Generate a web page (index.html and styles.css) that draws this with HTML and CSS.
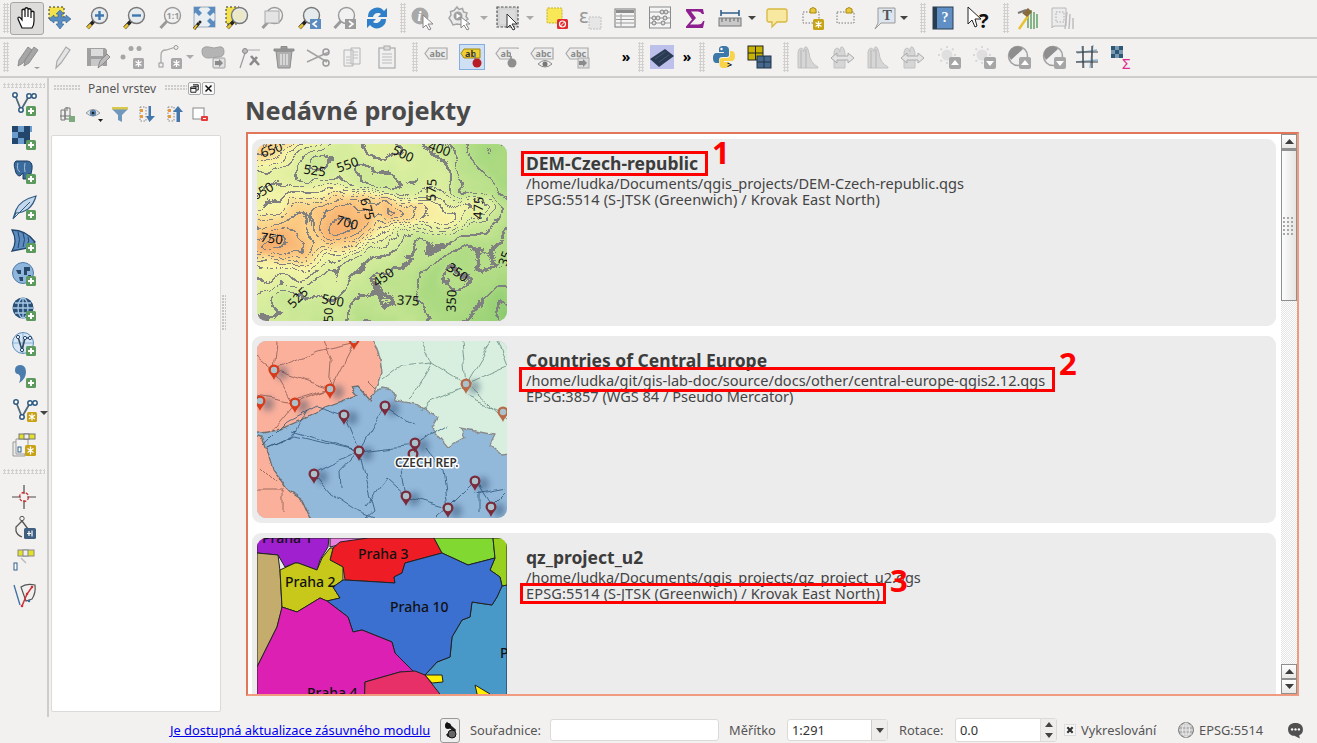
FILE: index.html
```html
<!DOCTYPE html>
<html lang="cs">
<head>
<meta charset="utf-8">
<title>QGIS – Nedávné projekty</title>
<link rel="stylesheet" href="styles.css">
</head>
<body>
<svg class="defs" width="0" height="0" aria-hidden="true">
  <defs>
    <g id="plus"><rect x="14" y="14" width="10" height="10" rx="1.5" fill="#5c9a5e"/><path d="M19 16v6M16 19h6" stroke="#fff" stroke-width="2"/></g>
    <g id="mag"><path d="M9 15L2.500 22" stroke="#222" stroke-width="3.500"/><path d="M6 18.500L2.500 22" stroke="#e8c22e" stroke-width="2.500"/><circle cx="14.500" cy="9.500" r="8" fill="#e6ebee" stroke="#777" stroke-width="1.400"/></g>
    <g id="magg"><path d="M9 15L2.500 22" stroke="#9a9a9a" stroke-width="3"/><circle cx="14.500" cy="9.500" r="8" fill="#f1f1f1" stroke="#9a9a9a" stroke-width="1.400"/></g>
    <g id="abc"><path d="M5 3H23V14H5L1 8.500Z" fill="#ececec" stroke="#a8a8a8" stroke-width="1.200"/><text x="5.500" y="12" class="lab">abc</text></g>
    <g id="hist"><path d="M3 23V7Q4 3 6 3T9 7V4Q10 1 11.500 2T14 8Q15 18 23 22V23Z" fill="#d6d6d6" stroke="#c2c2c2"/><path d="M6 5V23M11 4V23" stroke="#b4b4b4"/></g>
    <g id="hist2"><path d="M4 23V7Q5 3 7 3T10 7V4Q11 1 12.500 2T15 8V23Z" fill="#d6d6d6" stroke="#c2c2c2"/><path d="M1 13L7 8V11H18V8L24 13L18 18V15H7V18Z" fill="#e4e4e4" stroke="#aaa"/></g>
    <g id="sun"><circle cx="10" cy="10" r="5.500" fill="#dfdfdf"/><path d="M10 1V3M10 17V19M1 10H3M17 10H19M3.500 3.500L5 5M15 5L16.500 3.500M3.500 16.500L5 15" stroke="#d8d8d8" stroke-width="2"/><rect x="12" y="12" width="12" height="12" rx="2" fill="#a6a6a6"/></g>
    <g id="disc"><circle cx="11" cy="11" r="9.500" fill="#f0f0f0" stroke="#a0a0a0" stroke-width="1.500"/><path d="M4 15A8 8 0 0 1 16 4Z" fill="#8e8e8e"/><rect x="12" y="12" width="12" height="12" rx="2" fill="#a6a6a6"/></g>
    <g id="pin"><path d="M-5.500 0A5.500 5.500 0 1 1 5.500 0C5.500 3 2 5 0 10C-2 5-5.500 3-5.500 0Z" fill="currentColor"/><circle r="3.200" fill="#a9c2cc"/></g>
    <g id="v"><path d="M3 3L9 18L17 4H22" fill="none" stroke="#50687a" stroke-width="1.800"/><circle cx="3" cy="3" r="2.200" fill="#fff" stroke="#2e5a82" stroke-width="1.500"/><circle cx="9" cy="18" r="2.200" fill="#fff" stroke="#2e5a82" stroke-width="1.500"/><circle cx="17" cy="4" r="2.200" fill="#fff" stroke="#2e5a82" stroke-width="1.500"/><circle cx="22" cy="4" r="2.200" fill="#fff" stroke="#2e5a82" stroke-width="1.500"/></g>
    <linearGradient id="dbase" x1="0" y1="0" x2="1" y2="1"><stop offset="0" stop-color="#949494"/><stop offset=".5" stop-color="#7e7e7e"/><stop offset=".8" stop-color="#505050"/><stop offset="1" stop-color="#242424"/></linearGradient>
    <radialGradient id="pk"><stop offset="0" stop-color="#f4f4f4"/><stop offset=".6" stop-color="#e4e4e4" stop-opacity=".7"/><stop offset="1" stop-color="#d0d0d0" stop-opacity="0"/></radialGradient>
    <radialGradient id="lo"><stop offset="0" stop-color="#484848"/><stop offset="1" stop-color="#484848" stop-opacity="0"/></radialGradient>
    <radialGradient id="tl"><stop offset="0" stop-color="#d8d8d8"/><stop offset="1" stop-color="#d8d8d8" stop-opacity="0"/></radialGradient>
    <filter id="dem" x="0" y="0" width="100%" height="100%" color-interpolation-filters="sRGB">
      <feTurbulence type="fractalNoise" baseFrequency="0.03" numOctaves="3" seed="7" result="n"/>
      <feTurbulence type="fractalNoise" baseFrequency="0.02" numOctaves="2" seed="11"/>
      <feColorMatrix type="matrix" values="1 0 0 0 0  1 0 0 0 0  1 0 0 0 0  0 0 0 0 1" result="rel"/>
      <feGaussianBlur in="SourceGraphic" stdDeviation="6" result="b"/>
      <feComposite in="b" in2="rel" operator="arithmetic" k1="0" k2="1" k3="0.2" k4="-0.1" result="bh"/>
      <feDisplacementMap in="bh" in2="n" scale="24" xChannelSelector="R" yChannelSelector="G" result="d"/>
      <feComponentTransfer in="d" result="c">
        <feFuncR type="table" tableValues="0.36 0.47 0.66 0.84 0.97 0.99 0.96"/>
        <feFuncG type="table" tableValues="0.70 0.76 0.85 0.93 0.96 0.80 0.64"/>
        <feFuncB type="table" tableValues="0.36 0.40 0.50 0.62 0.66 0.52 0.40"/>
      </feComponentTransfer>
      <feColorMatrix in="d" type="matrix" values="0 0 0 0 0.5  0 0 0 0 0.5  0 0 0 0 0.5  1 0 0 0 0" result="h"/>
      <feComponentTransfer in="h">
        <feFuncA type="discrete" tableValues="0 0 0 0 0 0 1 0 0 0 0 0 0 1 0 0 0 0 0 0 1 0 0 0 0 0 0 1 0 0 0 0 0 0 1 0 0 0 0 0 0 1 0 0 0 0 0 0 1 0 0 0 0 0 0 1 0 0 0 0 0 0 1 0 0 0 0 0 0 1 0 0 0 0 0 0 1 0 0 0 0 0 0 1 0 0 0 0 0 0 1 0 0 0 0 0 0 1 0 0 0 0 0 0 1 0 0 0 0 0 0 1 0 0 0 0 0 0 1 0 0 0 0 0 0 1 0 0"/>
      </feComponentTransfer>
      <feGaussianBlur stdDeviation="0.45" result="l"/>
      <feMerge><feMergeNode in="c"/><feMergeNode in="l"/></feMerge>
    </filter>
    <filter id="soft"><feGaussianBlur stdDeviation="3"/></filter>
    <filter id="wig" x="-10%" y="-10%" width="120%" height="120%" color-interpolation-filters="sRGB">
      <feTurbulence type="fractalNoise" baseFrequency="0.05" numOctaves="2" seed="3" result="n"/>
      <feDisplacementMap in="SourceGraphic" in2="n" scale="9" xChannelSelector="R" yChannelSelector="G"/>
    </filter>
    <filter id="edge" x="-10%" y="-10%" width="120%" height="120%" color-interpolation-filters="sRGB">
      <feTurbulence type="fractalNoise" baseFrequency="0.12" numOctaves="2" seed="5" result="n"/>
      <feDisplacementMap in="SourceGraphic" in2="n" scale="5" xChannelSelector="R" yChannelSelector="G"/>
    </filter>
  </defs>
</svg>

<div class="app">
  <div class="tb">
    <i class="hd m3"></i>
    <span class="active m1"><svg class="ic" viewBox="0 0 24 24"><path d="M7 22L3 13Q2.500 10.500 5 11.500L7 14V4Q8.500 2.500 10 4V11V2.500Q11.500 1 13 2.500V11V3.500Q14.500 2 16 3.500V12V6Q17.500 4.500 19 6V15Q19 19 17 22Z" fill="#fff" stroke="#111" stroke-width="1.200"/></svg></span>
    <svg class="ic m4" viewBox="0 0 24 24"><rect x="1" y="1" width="15" height="13" fill="#f4e24c" stroke="#333" stroke-dasharray="2"/><path d="M12 4L16 8H14V11H18V9L23 13L18 17V15H14V18H16L12 23L8 18H10V15H6V17L1 13L6 9V11H10V8H8Z" fill="#5a8cc0" stroke="#2f5f92" stroke-width=".6"/></svg>
    <svg class="ic m13" viewBox="0 0 24 24"><use href="#mag"/><path d="M14.500 5V14M10 9.500H19" stroke="#3f78ae" stroke-width="2.400"/></svg>
    <svg class="ic m13" viewBox="0 0 24 24"><use href="#mag"/><path d="M10 9.500H19" stroke="#3f78ae" stroke-width="2.400"/></svg>
    <svg class="ic m12" viewBox="0 0 24 24"><use href="#magg"/><text x="8.500" y="13" class="t9 gy">1:1</text></svg>
    <svg class="ic m10" viewBox="0 0 24 24"><rect x="2" y="1" width="21" height="20" fill="#e8eef2" stroke="#9ab"/><path d="M2 1H9L6.500 3.500L10 7L7 10L3.500 6.500L2 8ZM23 1H16L18.500 3.500L15 7L18 10L21.500 6.500L23 8ZM23 21H16L18.500 18.500L15 15L18 12L21.500 15.500L23 14Z" fill="#5a8cc0"/><path d="M7 17L2 23" stroke="#222" stroke-width="3"/><path d="M5 19L2 23" stroke="#e8c22e" stroke-width="2"/><circle cx="8" cy="16" r="1.500" fill="#222"/></svg>
    <svg class="ic m9" viewBox="0 0 24 24"><rect x="1" y="1" width="13" height="17" fill="#f4e24c" stroke="#333" stroke-dasharray="2"/><use href="#mag"/><circle cx="14.500" cy="9.500" r="6" fill="#ebe8c8"/></svg>
    <svg class="ic m11" viewBox="0 0 24 24"><use href="#magg"/><rect x="5" y="5" width="14" height="12" fill="#e4e4e4" stroke="#aaa"/></svg>
    <svg class="ic m13" viewBox="0 0 24 24"><use href="#mag"/><rect x="13" y="13" width="11" height="10" fill="#5a8cc0"/><path d="M20 15L16 18L20 21" fill="none" stroke="#fff" stroke-width="1.600"/></svg>
    <svg class="ic m11" viewBox="0 0 24 24"><use href="#magg"/><rect x="13" y="13" width="11" height="10" fill="#9c9c9c"/><path d="M17 15L21 18L17 21" fill="none" stroke="#fff" stroke-width="1.600"/></svg>
    <svg class="ic m9" viewBox="0 0 24 24"><path d="M3 11A9 9 0 0 1 19 5L22 2V11H13L16 8A5 5 0 0 0 8 11Z" fill="#2f80c8"/><path d="M21 13A9 9 0 0 1 5 19L2 22V13H11L8 16A5 5 0 0 0 16 13Z" fill="#2f80c8"/></svg>
    <i class="hd m11"></i>
    <svg class="ic m5" viewBox="0 0 24 24"><circle cx="9" cy="10" r="8.500" fill="#a8a8a8"/><text x="6.500" y="15" class="t13 wi">i</text><path d="M12 9V22L15 19L18 24L20 23L17 18H22Z" fill="#fff" stroke="#888"/></svg>
    <svg class="ic m13" viewBox="0 0 24 24"><path d="M9 1L11 3.500L14.500 2.500L15.500 6L19 7L18 10.500L20 13L17 15L15 19L9 18L5 19L3 15L1 12L3 9L2.500 5.500L6 4.500Z" fill="#ececec" stroke="#a5a5a5" stroke-width="1.500"/><circle cx="10" cy="10" r="4.500" fill="#a0a0a0"/><path d="M8.500 7.500V12.500L12.500 10Z" fill="#fff"/><path d="M13 11V22L16 19L19 24L21 23L18 18H22Z" fill="#fff" stroke="#888"/></svg>
    <svg class="dr m7" viewBox="0 0 10 6"><path d="M1 1H9L5 5Z" fill="#aaa"/></svg>
    <svg class="ic m7" viewBox="0 0 24 24"><rect x="1" y="1" width="21" height="20" fill="#d4d4d4" stroke="#555" stroke-dasharray="2.500 1.500" stroke-width="1.200"/><rect x="4" y="4" width="15" height="14" fill="#dcdcdc"/><path d="M11 8V22L14 19L17 24L19 23L16 18H21Z" fill="#fff" stroke="#333"/></svg>
    <svg class="dr m5" viewBox="0 0 10 6"><path d="M1 1H9L5 5Z" fill="#aaa"/></svg>
    <svg class="ic m10" viewBox="0 0 24 24"><rect x="2" y="2" width="15" height="15" rx="1" fill="#f8e858" stroke="#c8b020" stroke-dasharray="2 1"/><rect x="12" y="13" width="11" height="10" rx="1.500" fill="#e02a30"/><circle cx="17.500" cy="18" r="3" fill="none" stroke="#fff" stroke-width="1.200"/><path d="M15.500 20L19.500 16" stroke="#fff"/></svg>
    <svg class="ic m9" viewBox="0 0 24 24"><rect x="11" y="11" width="12" height="12" fill="#e6e6e6" stroke="#c0c0c0" stroke-dasharray="2 1"/><text x="1" y="17" class="t20 gy">ε</text></svg>
    <svg class="ic m11" viewBox="0 0 24 24"><rect x="2" y="3" width="20" height="18" fill="#f4f4f4" stroke="#8c8c8c" stroke-width="1.200"/><path d="M3 5.500H21" stroke="#8c8c8c" stroke-width="3"/><path d="M3 10H21M3 13.500H21M3 17H21M8 8V20" stroke="#9a9a9a"/></svg>
    <svg class="ic m11" viewBox="0 0 24 24"><rect x="1.500" y="1" width="21" height="21" fill="#f4f4f4" stroke="#8c8c8c"/><path d="M2 6H22M2 12H22M2 17H22" stroke="#9a9a9a"/><g fill="#ddd" stroke="#808080"><circle cx="14" cy="6" r="2"/><circle cx="18" cy="6" r="2"/><circle cx="6" cy="12" r="2"/><circle cx="10" cy="12" r="2"/><circle cx="17" cy="12" r="2"/><circle cx="6" cy="17" r="2"/><circle cx="15" cy="17" r="2"/></g></svg>
    <svg class="ic m11" viewBox="0 0 24 24"><path d="M3 3H20L21 8H19Q18 5.500 15 5.500H8L13 12L7 18.500H15Q19 18.500 20 15H21.500L20 22H3V20.500L9 13.500L3 5Z" fill="#8e1f8e"/></svg>
    <svg class="ic m11" viewBox="0 0 24 24"><path d="M3 7H21M3 4V10M21 4V10" stroke="#2e5f8a" stroke-width="1.600"/><rect x="1" y="12" width="22" height="8" fill="#c8c8c8" stroke="#777"/><path d="M4 12V16M8 12V15M12 12V16M16 12V15M20 12V16" stroke="#666"/></svg>
    <svg class="dr dk m5" viewBox="0 0 10 6"><path d="M1 1H9L5 5Z" fill="#444"/></svg>
    <svg class="ic m8" viewBox="0 0 24 24"><path d="M4 3H20Q22 3 22 5V14Q22 16 20 16H12L7 21V16H4Q2 16 2 14V5Q2 3 4 3Z" fill="#f8e8a0" stroke="#d8b840" stroke-width="1.300"/></svg>
    <svg class="ic m12" viewBox="0 0 24 24"><rect x="2" y="6" width="16" height="11" fill="none" stroke="#777" stroke-dasharray="1.500 1.500"/><path d="M9 7V3L12 1.500L15 3V7Z" fill="#e8c83c" stroke="#a88a10"/><rect x="12" y="13" width="11" height="11" rx="1.500" fill="#c9a316"/><path d="M17.500 15V22M14.500 16.500L20.500 20.500M14.500 20.500L20.500 16.500" stroke="#fff" stroke-width="1.300"/></svg>
    <svg class="ic m10" viewBox="0 0 24 24"><rect x="2" y="6" width="17" height="11" fill="none" stroke="#777" stroke-dasharray="1.500 1.500"/><path d="M11 7V3L14 1.500L17 3V7Z" fill="#e8c83c" stroke="#a88a10"/></svg>
    <svg class="ic m14" viewBox="0 0 24 24"><path d="M5 2H22V17H8L2 23L5 17Z" fill="#dde6ee" stroke="#9a9a9a"/><text x="9.500" y="14" class="t13 tt">T</text></svg>
    <svg class="dr dk m2" viewBox="0 0 10 6"><path d="M1 1H9L5 5Z" fill="#444"/></svg>
    <i class="hd m11"></i>
    <svg class="ic m5" viewBox="0 0 24 24"><rect x="2" y="1" width="20" height="22" fill="#5f8fc4" stroke="#2a3c50"/><rect x="2" y="1" width="4" height="22" fill="#2a3c50"/><text x="14" y="16" class="t13 wt">?</text></svg>
    <svg class="ic m11" viewBox="0 0 24 24"><path d="M2 1V18L6 14L9 21L11 20L9 13H15Z" fill="#fff" stroke="#222"/><text x="13" y="22" class="t20 bk">?</text></svg>
    <i class="hd m13"></i>
    <svg class="ic m7" viewBox="0 0 24 24"><path d="M15 4V23M18 6V23M21 8V22M12 8V22" stroke="#5c9a5e" stroke-width="1.400"/><path d="M3 23L12 10" stroke="#e8c22e" stroke-width="2.400"/><path d="M6 7L12 2L16 6L11 11Z" fill="#8a6a3a"/><path d="M2 7L10 4" stroke="#777" stroke-width="2"/></svg>
    <svg class="ic m10" viewBox="0 0 24 24"><path d="M2 2H16V20H5Q2 20 2 22Z" fill="#ececec" stroke="#b8b8b8"/><rect x="6" y="6" width="8" height="10" fill="none" stroke="#aaa" stroke-dasharray="1.500"/><path d="M17 6L15 23M20 8L19 23M23 12V23" stroke="#bbb" stroke-width="1.400"/></svg>
  </div>

  <div class="tb">
    <i class="hd m3"></i>
    <svg class="ic m7" viewBox="0 0 24 24"><path d="M2 21L3 15L12 2L16 5L7 18ZM8 21L9 15L18 2L22 5L13 18Z" fill="#a6a6a6" stroke="#8e8e8e"/><path d="M18 22H24L21 24Z" fill="#999"/></svg>
    <svg class="ic m10" viewBox="0 0 24 24"><path d="M6 23L7 16L16 2L20 5L11 18Z" fill="#e4e4e4" stroke="#aaa" stroke-width="1.200"/></svg>
    <svg class="ic m12" viewBox="0 0 24 24"><path d="M1 3H19L21 5V21H1Z" fill="#a0a0a0"/><rect x="5" y="4" width="12" height="7" fill="#dcdcdc"/><rect x="5" y="14" width="12" height="7" fill="#c8c8c8"/><path d="M12 23L14 16L21 9L24 12L17 19Z" fill="#bdbdbd" stroke="#8a8a8a"/></svg>
    <svg class="ic m10" viewBox="0 0 24 24"><circle cx="11" cy="3.500" r="2.500" fill="#a6a6a6"/><circle cx="19" cy="3.500" r="2.500" fill="#a6a6a6"/><circle cx="3" cy="12" r="2.500" fill="#a6a6a6"/><rect x="13" y="13" width="11" height="11" rx="1.500" fill="#a8a8a8"/><path d="M18.500 15V22M15.500 16.500L21.500 20.500M15.500 20.500L21.500 16.500" stroke="#fff" stroke-width="1.300"/></svg>
    <svg class="ic m14" viewBox="0 0 24 24"><path d="M3 20V10Q3 5 8 5L18 2" fill="none" stroke="#aaa" stroke-width="1.300"/><circle cx="18" cy="2.500" r="2" fill="#f0f0f0" stroke="#999"/><rect x="1" y="18" width="4" height="4" fill="#f0f0f0" stroke="#999"/><rect x="13" y="13" width="11" height="11" rx="1.500" fill="#a8a8a8"/><path d="M18.500 15V22M15.500 16.500L21.500 20.500M15.500 20.500L21.500 16.500" stroke="#fff" stroke-width="1.300"/></svg>
    <svg class="dr m3" viewBox="0 0 10 6"><path d="M1 1H9L5 5Z" fill="#aaa"/></svg>
    <svg class="ic m6" viewBox="0 0 24 24"><path d="M1 6Q1 1 8 2Q13 4 18 2Q23 1 23 7Q23 12 17 12Q11 13 7 13Q1 13 1 6Z" fill="#b4b4b4" stroke="#a0a0a0"/><rect x="12" y="13" width="12" height="10" rx="1" fill="#e0e0e0" stroke="#a0a0a0"/><path d="M14 16H18V14L22 18L18 22V20H14Z" fill="#8a8a8a"/></svg>
    <svg class="ic m13" viewBox="0 0 24 24"><path d="M2 23L7 8" stroke="#999" stroke-width="1.200"/><circle cx="7" cy="6" r="2.500" fill="#bbb" stroke="#888"/><path d="M10 5H22" stroke="#aaa"/><path d="M12 20L19 12M13 11L21 20" stroke="#8a8a8a" stroke-width="2.600"/></svg>
    <svg class="ic m10" viewBox="0 0 24 24"><path d="M4 6H20L18 23H6Z" fill="#b0b0b0" stroke="#8c8c8c"/><path d="M2 4H22V6H2ZM9 4V1.500H15V4" fill="#9a9a9a" stroke="#8c8c8c"/><path d="M9 9V20M12 9V20M15 9V20" stroke="#f0f0f0" stroke-width="1.200"/></svg>
    <svg class="ic m10" viewBox="0 0 24 24"><path d="M1 5L21 17M1 17L14 11L23 7" stroke="#a4a4a4" stroke-width="1.600" fill="none"/><circle cx="20" cy="18" r="3" fill="none" stroke="#999" stroke-width="1.500"/><circle cx="20" cy="7" r="3" fill="none" stroke="#999" stroke-width="1.500"/></svg>
    <svg class="ic m10" viewBox="0 0 24 24"><path d="M4 5H13V21H4ZM11 3H20V19H11Z" fill="#f0f0f0" stroke="#b4b4b4"/><path d="M13 7H18M13 10H18M13 13H18M6 12H10M6 15H10M6 18H11" stroke="#c0c0c0"/></svg>
    <svg class="ic m11" viewBox="0 0 24 24"><rect x="4" y="3" width="16" height="20" fill="#f0f0f0" stroke="#aaa" stroke-width="1.200"/><rect x="9" y="1" width="6" height="4" fill="#ddd" stroke="#aaa"/><path d="M7 9H17M7 12H17M7 15H17M7 18H17" stroke="#bbb"/></svg>
    <i class="hd m13"></i>
    <svg class="ic m6" viewBox="0 0 24 24"><use href="#abc"/></svg>
    <span class="sel m12"><svg class="ic" viewBox="0 0 24 24"><path d="M4 4H20V13H4L1 8.500Z" fill="#f0d030" stroke="#a08810"/><text x="5" y="12" class="lab dkl">ab</text><path d="M15 8V14" stroke="#888" stroke-width="1.500"/><circle cx="17" cy="18" r="4.500" fill="#b81c24"/></svg></span>
    <svg class="ic m11" viewBox="0 0 24 24"><use href="#abc"/><path d="M16 4H24V15H16Z" fill="#f1f0ef"/><path d="M16 11V14" stroke="#888" stroke-width="1.500"/><circle cx="17" cy="18" r="4.500" fill="#8e8e8e"/></svg>
    <svg class="ic m11" viewBox="0 0 24 24"><use href="#abc"/><path d="M8 19Q15 12 22 19Q15 25 8 19Z" fill="#f0f0f0" stroke="#888"/><circle cx="15" cy="19" r="2.500" fill="#777"/></svg>
    <svg class="ic m11" viewBox="0 0 24 24"><use href="#abc"/><rect x="13" y="13" width="11" height="10" fill="#dcdcdc" stroke="#aaa"/><path d="M14 16H18V14L22 18L18 22V20H14Z" fill="#8a8a8a"/></svg>
    <span class="more mm">»</span>
    <i class="hd m6"></i>
    <svg class="chip m6" viewBox="0 0 24 24"><rect width="24" height="24" fill="#bcc0ea"/><path d="M0 14L15 4L24 11L9 22Z" fill="#2a3a52"/><path d="M5 14L15 7M9 17L19 10" stroke="#42586e"/></svg>
    <span class="more m7">»</span>
    <i class="hd m6"></i>
    <svg class="ic m7" viewBox="0 0 24 24"><path d="M12 1C7 1 7 3 7 5V7H12V8H5C2 8 1 10 1 13S2 18 5 18H7V15C7 13 8 12 10 12H15C16 12 17 11 17 10V5C17 3 16 1 12 1Z" fill="#3c78a8"/><circle cx="9.500" cy="4" r="1.200" fill="#fff"/><path d="M12 23C17 23 17 21 17 19V17H12V16H19C22 16 23 14 23 11S22 6 19 6H18V10C18 12 17 13 15 13H10C8.500 13 7.500 14 7.500 15V19C7.500 21 8 23 12 23Z" fill="#f8d44c"/><text x="15" y="23" class="t9 bk">&gt;</text></svg>
    <svg class="ic m11" viewBox="0 0 24 24"><rect x="1" y="1" width="15" height="14" fill="#c8b400" stroke="#222"/><path d="M8.500 1V15M1 8H16" stroke="#222"/><rect x="10" y="11" width="14" height="12" fill="#45688c" stroke="#1f3348"/><path d="M17 11V23M10 17H24" stroke="#1f3348"/></svg>
    <i class="hd m12"></i>
    <svg class="ic m6" viewBox="0 0 24 24"><use href="#hist"/></svg>
    <svg class="ic m11" viewBox="0 0 24 24"><use href="#hist2"/></svg>
    <svg class="ic m11" viewBox="0 0 24 24"><use href="#hist"/></svg>
    <svg class="ic m11" viewBox="0 0 24 24"><use href="#hist2"/></svg>
    <svg class="ic m13" viewBox="0 0 24 24"><use href="#sun"/><path d="M18 15L22 20H14Z" fill="#fff"/></svg>
    <svg class="ic m11" viewBox="0 0 24 24"><use href="#sun"/><path d="M18 21L22 16H14Z" fill="#fff"/></svg>
    <svg class="ic m11" viewBox="0 0 24 24"><use href="#disc"/><path d="M18 15L22 20H14Z" fill="#fff"/></svg>
    <svg class="ic m11" viewBox="0 0 24 24"><use href="#disc"/><path d="M18 21L22 16H14Z" fill="#fff"/></svg>
    <svg class="ic m9" viewBox="0 0 24 24"><path d="M2 8L22 5M1 17L23 15" stroke="#8ab2cc" stroke-width="1.400"/><path d="M7 1L9 23M18 0L15 23" stroke="#8ab2cc" stroke-width="1.400"/><path d="M1 7H23M1 17H23M8 1V23M17 1V23" stroke="#3a3a3a" stroke-width="1.200"/></svg>
    <svg class="ic m11" viewBox="0 0 24 24"><path d="M1 1H5V5H1ZM9 1H13V5H9ZM5 5H9V9H5ZM1 9H5V13H1ZM9 9H13V13H9Z" fill="#2c5878"/><path d="M5 1H9V5H5ZM1 5H5V9H1ZM9 5H13V9H9ZM5 9H9V13H5Z" fill="#7c98ae"/><text x="12" y="24" class="t17 sg">Σ</text></svg>
  </div>

  <div class="mid">
    <div class="side">
      <i class="hh hs"></i>
      <svg class="ic m4" viewBox="0 0 24 24"><use href="#v"/><use href="#plus"/></svg>
      <svg class="ic m10" viewBox="0 0 24 24"><path d="M0 0H6V6H0ZM12 0H18V6H12ZM6 6H12V12H6ZM18 6V12H12V6ZM0 12H6V18H0ZM12 12H18V18H12Z" fill="#23466c"/><path d="M6 0H12V6H6ZM0 6H6V12H0ZM6 12H12V18H6ZM18 0H20V6H18Z" fill="#6c9ccc"/><use href="#plus"/></svg>
      <svg class="ic m10" viewBox="0 0 24 24"><path d="M4 1H15Q21 1 20 9L19 14H16L15 19H11L11 13L8 16Q4 16 3 9Q1 3 4 1Z" fill="#3b6a9c" stroke="#1f3f62"/><path d="M6 3Q4 9 8 12M13 3Q12 8 13 12" stroke="#a5c2de" fill="none"/><use href="#plus"/></svg>
      <svg class="ic m12" viewBox="0 0 24 24"><path d="M1 23L4 14Q8 4 24 0Q22 8 16 13Q10 17 4 17Z" fill="#c3d8ec" stroke="#2f5a82" stroke-width="1.200"/><path d="M2 22L18 6" stroke="#2f5a82"/><use href="#plus"/></svg>
      <svg class="ic m9" viewBox="0 0 24 24"><path d="M0 1Q14 1 23 13Q18 17 16 19L0 22Q6 12 0 1Z" fill="#5c8cc0" stroke="#23466c" stroke-width="1.300"/><path d="M6 3Q9 10 6 19M11 4Q14 10 11 18M16 8Q18 12 15 16" stroke="#23466c" fill="none"/><use href="#plus"/></svg>
      <svg class="ic m9" viewBox="0 0 24 24"><circle cx="11" cy="11" r="10.500" fill="#8fb6dc" stroke="#4d7aa8"/><path d="M4 8H9V12H6ZM12 5H18V9H15V13H12ZM7 15H11V19H8ZM16 13H19V16H16Z" fill="#2a4868"/><use href="#plus"/></svg>
      <svg class="ic m11" viewBox="0 0 24 24"><circle cx="11" cy="11" r="10.500" fill="#2a5078"/><path d="M1 11H21M11 1V21M3 6H19M3 16H19" stroke="#a8c8e4" stroke-width="1.300"/><ellipse cx="11" cy="11" rx="5" ry="10" fill="none" stroke="#a8c8e4" stroke-width="1.300"/><use href="#plus"/></svg>
      <svg class="ic m11" viewBox="0 0 24 24"><circle cx="11" cy="11" r="10.500" fill="#d6e6f4" stroke="#5e8cb8"/><path d="M1 11H21M11 1V21" stroke="#8cb2d4"/><path d="M6 5L10 18L13 6H18" fill="none" stroke="#30495e" stroke-width="1.600"/><circle cx="6" cy="5" r="1.600" fill="#fff" stroke="#23466c"/><circle cx="10" cy="18" r="1.600" fill="#fff" stroke="#23466c"/><circle cx="13" cy="6" r="1.600" fill="#fff" stroke="#23466c"/><circle cx="18" cy="6" r="1.600" fill="#fff" stroke="#23466c"/><use href="#plus"/></svg>
      <svg class="ic m8" viewBox="0 0 24 24"><path d="M3 6Q3 1 9 1Q14 2 14 8Q14 15 7 19Q10 12 6 10Q3 10 3 6Z" fill="#4a7cac"/><use href="#plus"/></svg>
      <span class="stack m11"><svg class="ic" viewBox="0 0 24 24"><use href="#v"/><rect x="14" y="13" width="10" height="10" rx="1.500" fill="#c9a316"/><path d="M19 14.500V21.500M16 16L22 20M16 20L22 16" stroke="#fff" stroke-width="1.200"/></svg><svg class="dr dk" viewBox="0 0 10 6"><path d="M1 1H9L5 5Z" fill="#444"/></svg></span>
      <svg class="ic m11" viewBox="0 0 24 24"><path d="M1 8H13V22H1Z" fill="#ececec" stroke="#999"/><path d="M4 5H16V20H4Z" fill="#f4f4f4" stroke="#999"/><rect x="7" y="0" width="16" height="5" fill="#e4e224" stroke="#777"/><rect x="12" y="0" width="5" height="5" fill="#eee" stroke="#777"/><rect x="6" y="13" width="3" height="5" fill="#fff" stroke="#2e5f8a"/><rect x="13" y="11" width="11" height="11" rx="1.500" fill="#c9a316"/><path d="M18.500 12.500V20.500M15.500 14.500L21.500 18.500M15.500 18.500L21.500 14.500" stroke="#fff" stroke-width="1.300"/></svg>
      <i class="hh m11"></i>
      <svg class="ic m11" viewBox="0 0 24 24"><path d="M12 0V9M12 15V24M0 12H9M15 12H24" stroke="#4c4c4c" stroke-width="1.200"/><circle cx="12" cy="12" r="4.500" fill="none" stroke="#d03030" stroke-width="1.300" stroke-dasharray="3 1.500"/></svg>
      <svg class="ic m6" viewBox="0 0 24 24"><circle cx="10" cy="3.500" r="2.200" fill="none" stroke="#555"/><path d="M10 6L4 12V16Q5 20 10 22M10 6L16 14" stroke="#555" fill="none" stroke-width="1.300"/><rect x="12" y="13" width="12" height="11" rx="1.500" fill="#3f6080"/><path d="M15 18.500H19M17 16V21M20 15.500V21.500" stroke="#fff" stroke-width="1.200"/></svg>
      <svg class="ic m9" viewBox="0 0 24 24"><rect x="6" y="2" width="16" height="6" fill="#e4e224" stroke="#888"/><rect x="11" y="2" width="5" height="6" fill="#eee" stroke="#888"/><path d="M9 10L14 15" stroke="#bbb" stroke-width="1.500"/><rect x="2" y="15" width="3" height="7" fill="#fff" stroke="#2e5f8a"/></svg>
      <svg class="ic m11" viewBox="0 0 24 24"><path d="M2 2L8 22" stroke="#3c70a4" stroke-width="1.300"/><path d="M9 4Q14 0 23 2Q24 10 20 16L14 18Q11 10 9 4Z" fill="#f0f0f0" stroke="#555" stroke-width="1.200"/><path d="M10 23L15 11L20 4" stroke="#d03030" fill="none" stroke-width="1.500"/><g fill="#d03030"><circle cx="10" cy="23" r="1.300"/><circle cx="15" cy="11" r="1.300"/><circle cx="20" cy="4" r="1.300"/></g><circle cx="17" cy="18" r="1.300" fill="#3c70a4"/></svg>
    </div>

    <div class="panel">
      <div class="ptitle">
        <i class="hp w26"></i>
        <span class="pname">Panel vrstev</span>
        <i class="hp w22"></i>
        <span class="wb"><svg viewBox="0 0 12 12"><path d="M4 1H11V8H8.500M1 4H8V11H1ZM1 6H8M4 3H11" fill="none" stroke="#111" stroke-width="1.200"/></svg></span>
        <span class="wb"><svg viewBox="0 0 12 12"><path d="M2 2L10 10M10 2L2 10" stroke="#111" stroke-width="2"/></svg></span>
      </div>
      <div class="ptools">
        <svg class="pi p1" viewBox="0 0 18 18"><path d="M3 5H7V15H3ZM7 3H12V14H7Z" fill="#eee" stroke="#777"/><path d="M2 11H13M9 2V6" stroke="#777"/><rect x="11" y="11" width="6" height="6" fill="#7dab7e"/></svg>
        <svg class="pi p2" viewBox="0 0 18 18"><path d="M1 8Q8 1 15 8Q8 14 1 8Z" fill="#dfe6ec" stroke="#999"/><circle cx="8" cy="8" r="3.200" fill="#5a84ae"/><circle cx="8" cy="8" r="1.300" fill="#222"/><path d="M13 14H18L15.500 17Z" fill="#222"/></svg>
        <svg class="pi p3" viewBox="0 0 18 18"><path d="M1 2H17V4L11 10V17L7 15V10L1 4Z" fill="#7098bc"/><path d="M1 2H17V4.500H1Z" fill="#d8c84c"/></svg>
        <svg class="pi p2" viewBox="0 0 18 18"><path d="M2 2H8V16H2Z" fill="none" stroke="#888" stroke-dasharray="1.500"/><path d="M2 4H5V7H2ZM2 10H5V13H2Z" fill="#e69a3c"/><path d="M13 1V11H17L11.500 17L8 11H10.500V1Z" fill="#4478ac"/></svg>
        <svg class="pi p4" viewBox="0 0 18 18"><path d="M2 2H8V16H2Z" fill="none" stroke="#888" stroke-dasharray="1.500"/><path d="M2 4H5V7H2ZM2 10H5V13H2Z" fill="#e69a3c"/><path d="M10.500 17V7H7L12 1L17 7H14V17Z" fill="#4478ac"/></svg>
        <svg class="pi p1" viewBox="0 0 18 18"><rect x="2" y="3" width="11" height="11" fill="#fff" stroke="#8a8a8a"/><rect x="10" y="11" width="7" height="5" rx="1" fill="#e83a3a"/><path d="M12 13.500H15" stroke="#fff"/></svg>
      </div>
      <div class="plist"></div>
    </div>

    <div class="split"><i></i></div>

    <main class="main">
      <h1 class="head">Nedávné projekty</h1>
      <div class="list">
        <div class="rows">
          <article class="card">
            <svg class="thumb" viewBox="0 0 250 177">
              <g filter="url(#dem)">
                <rect x="-40" y="-40" width="330" height="260" fill="url(#dbase)"/>
                <ellipse cx="250" cy="10" rx="90" ry="60" fill="url(#lo)"/>
                <ellipse cx="0" cy="-5" rx="90" ry="30" fill="url(#tl)"/>
                <path d="M-40 62L50 38L130 50L235 60L235 70L150 88L60 130L-40 158Z" fill="#a6a6a6"/>
                <path d="M-40 80L55 57L110 48L170 70L130 86L50 118L-40 128Z" fill="#c4c4c4"/>
                <ellipse cx="88" cy="78" rx="34" ry="30" fill="url(#pk)"/>
                <ellipse cx="15" cy="102" rx="60" ry="24" fill="url(#pk)"/>
                <ellipse cx="135" cy="68" rx="26" ry="14" fill="url(#pk)"/>
              </g>
              <g class="cl">
                <text transform="translate(16 10) rotate(-20)">650</text>
                <text transform="translate(57 31) rotate(8)">525</text>
                <text transform="translate(92 25) rotate(-20)">550</text>
                <text transform="translate(144 14) rotate(25)">500</text>
                <text transform="translate(181 9) rotate(20)">400</text>
                <text transform="translate(8 51) rotate(-30)">650</text>
                <text transform="translate(179 46) rotate(-88)">575</text>
                <text transform="translate(106 66) rotate(75)">675</text>
                <text transform="translate(226 64) rotate(-88)">475</text>
                <text transform="translate(89 83) rotate(15)">700</text>
                <text transform="translate(14 99) rotate(8)">750</text>
                <text transform="translate(198 132) rotate(35)">350</text>
                <text transform="translate(252 116) rotate(-70)">35</text>
                <text transform="translate(129 137) rotate(-35)">450</text>
                <text transform="translate(44 157) rotate(-45)">525</text>
                <text transform="translate(75 161) rotate(10)">500</text>
                <text transform="translate(151 161) rotate(3)">375</text>
                <text transform="translate(199 157) rotate(-88)">350</text>
                <text transform="translate(76 171) rotate(-90)">50</text>
              </g>
            </svg>
            <div class="info">
              <h2 class="title">DEM-Czech-republic</h2>
              <p class="line">/home/ludka/Documents/qgis_projects/DEM-Czech-republic.qgs</p>
              <p class="line crs">EPSG:5514 (S-JTSK (Greenwich) / Krovak East North)</p>
            </div>
            <span class="mark mk1"></span><span class="num nm1">1</span>
          </article>

          <article class="card">
            <svg class="thumb" viewBox="0 0 250 177">
              <rect width="250" height="177" fill="#92b8da"/>
              <g filter="url(#edge)">
                <path d="M113 -10L123 17L125 32L118 52L113 59L101 46L94 47L100 54L68 66L51 76L21 89L5 92L-10 89V-10Z" fill="#fbb09c" stroke="#6e6e6e" stroke-width="1.300"/>
                <path d="M113 -10L123 17L125 32L118 52L125 47L135 49L138 59L161 64L181 76L175 87L191 106L208 96L203 87L238 94L233 104L245 114L260 112V-10Z" fill="#d8efe0" stroke="#8a8a8a" stroke-width="1.300"/>
                <path d="M5 96L11 112L16 129L31 149L45 159L58 187H-10V92Z" fill="#fbb09c" stroke="#6e6e6e" stroke-width="1.300"/>
              </g>
              <g filter="url(#wig)">
                <g class="rd rdb">
                  <path d="M102 110L87 74L60 65L31 80L5 106M102 110L128 65L158 85M102 110L38 95L11 107L36 95L50 70M102 110L158 104L190 85M102 110L68 127L57 133M102 110L84 130L85 148M102 110L110 140L118 170L110 177M102 110L35 90"/>
                  <path d="M158 104L156 113L145 130L149 155L191 167L218 140L234 166L250 150M57 133L70 150L100 170L118 177M149 155L130 138L110 165M191 167L186 130L170 108M218 152L250 146M222 150V170M191 167L180 177"/>
                </g>
                <g class="rd rdr">
                  <path d="M17 29L73 48L38 62L0 55M17 29L0 15M17 29L60 10L97 2M73 48L75 20L65 0M73 48L97 2M17 29L35 60L73 48M38 62L15 90M110 40L120 50M20 0L17 29M0 150H25V170M5 125L20 140"/>
                </g>
                <g class="rd rdg">
                  <path d="M209 43L170 60L165 70M209 43L250 80M209 43L205 0M209 43L175 22L165 0M175 22L145 25L125 40M209 43L250 25L240 0M175 22L155 55L150 60M246 71L210 55M209 43L235 0"/>
                </g>
              </g>
              <g class="shd" filter="url(#soft)">
                <ellipse cx="25" cy="32" rx="6" ry="7"/><ellipse cx="81" cy="51" rx="6" ry="7"/><ellipse cx="46" cy="65" rx="6" ry="7"/><ellipse cx="11" cy="63" rx="6" ry="7"/><ellipse cx="217" cy="46" rx="6" ry="7"/><ellipse cx="95" cy="77" rx="6" ry="7"/><ellipse cx="136" cy="68" rx="6" ry="7"/><ellipse cx="166" cy="105" rx="6" ry="7"/><ellipse cx="110" cy="113" rx="6" ry="7"/><ellipse cx="65" cy="136" rx="6" ry="7"/><ellipse cx="157" cy="158" rx="6" ry="7"/><ellipse cx="199" cy="170" rx="6" ry="7"/><ellipse cx="226" cy="143" rx="6" ry="7"/><ellipse cx="242" cy="169" rx="6" ry="7"/>
              </g>
              <g color="#d83a1a"><use href="#pin" x="17" y="29"/><use href="#pin" x="73" y="48"/><use href="#pin" x="38" y="62"/><use href="#pin" x="3" y="60"/><use href="#pin" x="97" y="-1"/></g>
              <g color="#b86a48"><use href="#pin" x="209" y="43"/><use href="#pin" x="246" y="71"/></g>
              <g color="#7a2a3a"><use href="#pin" x="87" y="74"/><use href="#pin" x="128" y="65"/><use href="#pin" x="156" y="113"/><use href="#pin" x="158" y="102"/><use href="#pin" x="102" y="110"/><use href="#pin" x="57" y="133"/><use href="#pin" x="149" y="155"/><use href="#pin" x="191" y="167"/><use href="#pin" x="218" y="140"/><use href="#pin" x="234" y="166"/></g>
              <text class="cz" x="138" y="126">CZECH REP.</text>
            </svg>
            <div class="info">
              <h2 class="title">Countries of Central Europe</h2>
              <p class="line">/home/ludka/git/gis-lab-doc/source/docs/other/central-europe-qgis2.12.qgs</p>
              <p class="line">EPSG:3857 (WGS 84 / Pseudo Mercator)</p>
            </div>
            <span class="mark mk2"></span><span class="num nm2">2</span>
          </article>

          <article class="card">
            <svg class="thumb" viewBox="0 0 250 177">
              <g class="pl">
                <path fill="#4898c8" d="M245 48L250 47V177H168V137L180 124L193 119L195 99L205 82L213 79L215 64L235 67L240 59Z"/>
                <path fill="#e880e0" d="M73 0V9L111 0Z"/>
                <path fill="#a020d0" d="M0 0H72L71 9L63 22L60 32L41 25L38 25L28 29L21 17L0 15Z"/>
                <path fill="#c4ad6c" d="M0 15L21 17L23 33L25 70L20 89L0 129Z"/>
                <path fill="#ee1c24" d="M83 4L111 0H177L185 15L148 25L145 35L137 39L138 45L88 42L86 29L73 22L76 10Z"/>
                <path fill="#80d830" d="M177 0H236L238 20L211 27L185 15Z"/>
                <path fill="#98d020" d="M236 0H250V47L245 48L243 39L233 32L238 20Z"/>
                <path fill="#c8c81a" d="M73 10L76 10L73 22L86 29L86 42L76 49L83 60L70 63L63 60L40 74L25 69L23 32L38 25L41 25L60 32L65 20Z"/>
                <path fill="#3b6fd0" d="M148 25L185 15L211 27L238 20L233 32L243 39L245 48L240 59L235 67L215 64L213 79L205 82L195 99L193 119L180 124L168 137L158 135L138 115L135 104L105 92L96 94L91 79L70 63L83 60L76 49L86 42L88 42L138 45L137 39L145 35Z"/>
                <path fill="#dc20b4" d="M0 129L20 89L25 69L40 74L63 60L70 63L91 79L96 94L105 92L135 104L138 115L158 135L143 134L108 144L107 177H0Z"/>
                <path fill="#e83068" d="M107 177L108 144L143 134L158 133L168 137L186 160L200 177Z"/>
                <path fill="#ffee00" d="M168 137L185 137L186 144L175 145ZM218 147L233 156L240 177H225Z"/>
              </g>
              <g class="pr">
                <text x="5" y="5">Praha 1</text>
                <text x="101" y="21">Praha 3</text>
                <text x="28" y="49">Praha 2</text>
                <text x="133" y="74">Praha 10</text>
                <text x="50" y="160">Praha 4</text>
                <text x="243" y="120">P</text>
              </g>
            </svg>
            <div class="info">
              <h2 class="title">qz_project_u2</h2>
              <p class="line">/home/ludka/Documents/qgis_projects/qz_project_u2.qgs</p>
              <p class="line crs">EPSG:5514 (S-JTSK (Greenwich) / Krovak East North)</p>
            </div>
            <span class="mark mk3"></span><span class="num nm3">3</span>
          </article>
        </div>
        <div class="sb">
          <span class="sbtn"><svg viewBox="0 0 9 5"><path d="M0 5L4.500 0L9 5Z" fill="#3c3c3c"/></svg></span>
          <span class="thumbbar"><i></i></span>
          <span class="track"></span>
          <span class="sbtn"><svg viewBox="0 0 9 5"><path d="M0 5L4.500 0L9 5Z" fill="#3c3c3c"/></svg></span>
          <span class="sbtn"><svg viewBox="0 0 9 5"><path d="M0 0L4.500 5L9 0Z" fill="#3c3c3c"/></svg></span>
        </div>
      </div>
    </main>
  </div>

  <footer class="status">
    <a class="upd" href="#">Je dostupná aktualizace zásuvného modulu</a>
    <span class="bug"><svg viewBox="0 0 18 23"><path d="M5 4L13 11L6 17" stroke="#222" stroke-width="3" fill="none"/><circle cx="11" cy="15" r="4" fill="#666" stroke="#111"/><circle cx="7" cy="7" r="3" fill="#111"/></svg></span>
    <label class="lb l1">Souřadnice:</label>
    <span class="inp i1"></span>
    <label class="lb l2">Měřítko</label>
    <span class="inp i2"><span class="val">1:291</span><span class="cb"><svg viewBox="0 0 8 5"><path d="M0 0H8L4 5Z" fill="#444"/></svg></span></span>
    <label class="lb l3">Rotace:</label>
    <span class="inp i3"><span class="val">0.0</span><span class="spin"><svg viewBox="0 0 8 5"><path d="M0 5H8L4 0Z" fill="#444"/></svg><svg viewBox="0 0 8 5"><path d="M0 0H8L4 5Z" fill="#444"/></svg></span></span>
    <span class="chk"><svg viewBox="0 0 9 9"><path d="M1.500 1.500L7.500 7.500M7.500 1.500L1.500 7.500" stroke="#333" stroke-width="2.400"/></svg></span>
    <label class="lb l4">Vykreslování</label>
    <svg class="globe" viewBox="0 0 16 16"><circle cx="8" cy="8" r="7.500" fill="#b4b4b4" stroke="#808080"/><path d="M1 8H15M8 1V15M2.500 4H13.500M2.500 12H13.500" stroke="#eee"/><ellipse cx="8" cy="8" rx="3.500" ry="7" fill="none" stroke="#eee"/></svg>
    <label class="lb l5">EPSG:5514</label>
    <svg class="msg" viewBox="0 0 16 16"><path d="M8 1C3.500 1 1 3.500 1 7S3.500 13 7 13L12 15.500L11.500 12.500C14 11.500 15 9.500 15 7C15 3.500 12.500 1 8 1Z" fill="#505050"/><circle cx="4.800" cy="7" r="1.100" fill="#fff"/><circle cx="8" cy="7" r="1.100" fill="#fff"/><circle cx="11.200" cy="7" r="1.100" fill="#fff"/></svg>
  </footer>
</div>
</body>
</html>
```

FILE: styles.css
```css
* { box-sizing: border-box; }
html, body { margin: 0; height: 743px; overflow: hidden; }
body { background: #f2f1f0; color: #444; font-family: "Noto Sans", "Open Sans", sans-serif; font-size: 13px; }
.defs { position: absolute; }
.app { display: flex; flex-direction: column; height: 743px; }

/* spacing scale shared by horizontal and vertical tool strips */
.m1 { --m: 1px; } .m2 { --m: 2px; } .m3 { --m: 3px; } .m4 { --m: 4px; } .m5 { --m: 5px; }
.m6 { --m: 6px; } .m7 { --m: 7px; } .m8 { --m: 8px; } .m9 { --m: 9px; } .m10 { --m: 10px; }
.m11 { --m: 11px; } .m12 { --m: 12px; } .m13 { --m: 13px; } .m14 { --m: 14px; } .mm { --m: 31px; }

.tb { display: flex; align-items: center; height: 39px; border-bottom: 2px solid #cfcdcb; flex: none; padding-bottom: 1px; }
.tb > * { margin-left: var(--m, 0); flex: none; }
.ic { width: 24px; height: 24px; display: block; overflow: visible; flex: none; }
.dr { width: 10px; height: 6px; flex: none; }
.hd { width: 6px; height: 30px; background: radial-gradient(circle at 1.500px 1.500px, #d2d0ce 1px, transparent 1.200px) 0 0 / 3px 3px; }
.active { width: 34px; height: 33px; display: flex; align-items: center; justify-content: center; background: #dedcda; border: 1px solid #a8a6a4; border-radius: 3px; }
.sel { width: 24px; height: 24px; background: #d0e0f4; outline: 1px solid #82aee0; }
.chip { width: 24px; height: 24px; }
.more { width: 12px; font-size: 14px; font-weight: 700; color: #000; text-align: center; line-height: 1; }

.lab { font-size: 9px; font-weight: 700; fill: #8a8a8a; font-family: "Noto Sans", sans-serif; }
.dkl { fill: #333; }
.t9 { font-size: 9px; font-weight: 700; font-family: "Noto Sans", sans-serif; }
.t13 { font-size: 14px; font-weight: 700; font-family: "Liberation Serif", serif; }
.t17 { font-size: 15px; font-family: "Noto Sans", sans-serif; }
.t20 { font-size: 20px; font-family: "Noto Sans", sans-serif; }
.gy { fill: #999; } .wi { fill: #fff; font-style: italic; } .tt { fill: #555; }
.wt { fill: #fff; text-anchor: middle; } .bk { fill: #111; font-weight: 700; } .sg { fill: #dd2a90; }

.mid { flex: 1; display: flex; min-height: 0; }
.side { width: 49px; flex: none; border-right: 2px solid #cfcdcb; display: flex; flex-direction: column; align-items: center; }
.side > * { margin-top: var(--m, 0); flex: none; }
.hh { width: 42px; height: 5px; background: radial-gradient(circle at 1.500px 1.500px, #d2d0ce 1px, transparent 1.200px) 0 0 / 4px 3px; }
.hs { --m: 5px; }
.stack { position: relative; display: block; margin-left: 2px; }
.stack .dr { position: absolute; left: 26px; top: 11px; }

.panel { width: 173px; flex: none; padding: 3px 0 0 2px; display: flex; flex-direction: column; }
.ptitle { display: flex; align-items: center; height: 14px; }
.hp { height: 6px; background: radial-gradient(circle at 1px 1px, #cfcdcb 1px, transparent 1.200px) 0 0 / 3px 3px; flex: none; }
.w26 { width: 26px; margin-left: 3px; }
.w22 { width: 22px; margin-left: 10px; }
.pname { width: 67px; margin-left: 8px; font-size: 12px; color: #555; white-space: nowrap; }
.wb { width: 13px; height: 13px; margin-left: 1px; border: 1px solid #aaa; border-radius: 2px; display: flex; background: #f8f8f8; padding: 1px; }
.wb:first-of-type { margin-left: 5px; }
.ptools { display: flex; align-items: center; height: 30px; margin-top: 4px; }
.pi { width: 18px; height: 18px; flex: none; }
.p1 { margin-left: 7px; } .p2 { margin-left: 9px; } .p3 { margin-left: 8px; } .p4 { margin-left: 10px; }
.plist { width: 170px; height: 577px; margin-top: 6px; background: #fff; border: 1px solid #dcdad8; border-radius: 2px; }

.split { width: 4px; flex: none; display: flex; align-items: center; padding-bottom: 170px; }
.split i { display: block; width: 4px; height: 36px; background: radial-gradient(circle at 1px 1px, #c8c6c4 1px, transparent 1.200px) 0 0 / 3px 3px; }

.main { flex: 1; min-width: 0; padding: 0 18px 0 20px; display: flex; flex-direction: column; }
.head { margin: 16px 0 0 -1px; height: 38px; font-size: 25.300px; line-height: 33px; font-weight: 700; color: #4a4a4a; white-space: nowrap; }
.list { display: flex; height: 564px; border: 2px solid #e2765a; border-right-color: #f09a80; border-bottom-color: #f09a80; background: #fff; }
.rows { flex: 1; min-width: 0; overflow: hidden; padding: 5px 5px 0 4px; display: flex; flex-direction: column; gap: 10px; }
.card { position: relative; height: 187px; flex: none; display: flex; padding: 5px; background: #ececec; border-radius: 9px; }
.thumb { display: block; width: 250px; height: 177px; flex: none; border-radius: 9px; overflow: hidden; }
.info { margin-left: 19px; padding-top: 8px; }
.title { margin: 0; font-size: 17.500px; line-height: 23px; font-weight: 700; color: #3c3c3c; white-space: nowrap; }
.line { margin: 0; font-size: 14.550px; line-height: 16px; color: #444; white-space: nowrap; }
.crs { letter-spacing: .12px; }
.mark { position: absolute; border: 3px solid #f00; }
.mk1 { left: 269px; top: 12px; width: 187px; height: 25px; }
.mk2 { left: 267px; top: 31px; width: 536px; height: 25px; }
.mk3 { left: 268px; top: 50px; width: 366px; height: 21px; }
.num { position: absolute; color: #f00; font-size: 31px; line-height: 30px; font-weight: 700; font-family: "Noto Sans", sans-serif; }
.nm1 { left: 460px; top: -2px; }
.nm2 { left: 807px; top: 12px; }
.nm3 { left: 638px; top: 32px; }

.cl text { font-size: 13px; fill: #111; text-anchor: middle; font-family: "Noto Sans", sans-serif; }
.rd path { fill: none; stroke-width: .8; }
.rdb path { stroke: #2f5878; }
.rdr path { stroke: #8a5a50; }
.rdg path { stroke: #6a8a80; }
.shd { fill: #1c3a5a; opacity: .4; }
.cz { font-size: 11.800px; font-weight: 600; fill: #333; stroke: #fff; stroke-width: 3px; paint-order: stroke; stroke-linejoin: round; font-family: "Noto Sans", sans-serif; }
.pl path { stroke: #222; stroke-width: 1; }
.pr text { font-size: 14px; font-weight: 500; fill: #111; font-family: "Noto Sans", sans-serif; }

.sb { width: 16px; flex: none; display: flex; flex-direction: column; background: #fff; }
.sbtn { height: 15px; flex: none; display: flex; align-items: center; justify-content: center; background: linear-gradient(#fdfdfd, #e9e8e7); border: 1px solid #8f8f8f; }
.sbtn svg { width: 9px; height: 5px; }
.thumbbar { height: 152px; flex: none; display: flex; align-items: center; justify-content: center; background: linear-gradient(90deg, #fcfcfc, #e6e5e4); border: 1px solid #8f8f8f; border-top-width: 2px; }
.thumbbar i { display: block; width: 12px; height: 18px; background: radial-gradient(circle at 1px 1px, #a8a8a8 1px, transparent 1.200px) 0 0 / 4px 4px; }
.track { flex: 1; background: repeating-conic-gradient(#e4e4e4 0 25%, #fff 0 50%) 0 0 / 2px 2px; }

.status { height: 26px; flex: none; display: flex; align-items: center; padding-left: 170px; font-size: 12.850px; }
.status > * { flex: none; }
.upd { width: 260px; color: #0000ee; white-space: nowrap; }
.bug { width: 20px; height: 25px; margin-left: 10px; border: 1px solid #999; border-radius: 3px; display: flex; background: #eee; }
.lb { color: #555; white-space: nowrap; }
.l1 { width: 71px; margin-left: 10px; }
.inp { height: 22px; background: #fff; border: 1px solid #dcdad8; border-radius: 3px; display: flex; align-items: center; }
.i1 { width: 169px; margin-left: 9px; }
.l2 { width: 48px; margin-left: 10px; }
.i2 { width: 101px; margin-left: 10px; }
.val { flex: 1; padding-left: 4px; color: #333; }
.cb { width: 16px; height: 20px; background: #eeedec; border-left: 1px solid #ccc; display: flex; align-items: center; justify-content: center; }
.cb svg { width: 8px; height: 5px; }
.l3 { width: 46px; margin-left: 11px; }
.i3 { width: 102px; height: 24px; margin-left: 10px; }
.spin { width: 16px; height: 22px; display: flex; flex-direction: column; align-items: center; justify-content: space-around; background: #eeedec; border-left: 1px solid #ddd; }
.spin svg { width: 8px; height: 5px; }
.chk { width: 12px; height: 12px; margin-left: 7px; display: flex; padding: 1px; background: #f6f6f6; border: 1px solid #ddd; }
.l4 { width: 77px; margin-left: 5px; }
.globe { width: 16px; height: 16px; margin-left: 20px; }
.l5 { width: 65px; margin-left: 5px; }
.msg { width: 17px; height: 17px; margin-left: 23px; }
```
